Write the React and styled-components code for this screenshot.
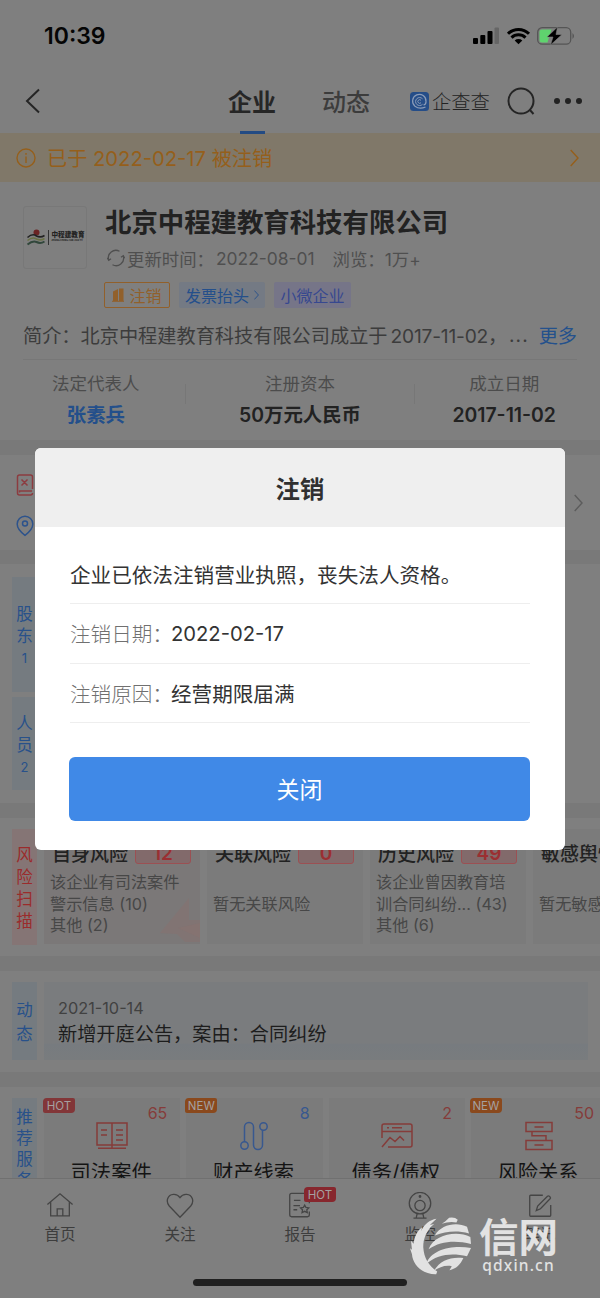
import React from "react";
import styled, { createGlobalStyle, css } from "styled-components";

const flexbox = ({ dir = "row", jc = "center", ai = "center" } = {}) => css`
  display: flex;
  flex-direction: ${dir};
  justify-content: ${jc};
  align-items: ${ai};
`;

const risks = [
  {
    title: "自身风险",
    count: 12,
    lines: ["该企业有司法案件", "警示信息 (10)", "其他 (2)"],
    hot: true
  },
  { title: "关联风险", count: 0, lines: ["暂无关联风险"] },
  {
    title: "历史风险",
    count: 49,
    lines: ["该企业曾因教育培", "训合同纠纷... (43)", "其他 (6)"]
  },
  { title: "敏感舆情", count: 0, lines: ["暂无敏感舆情"] }
];

const BookIcon = () => (
  <svg width="32" height="30" viewBox="0 0 32 30" fill="none" stroke="currentColor" strokeWidth="1.5">
    <path d="M1 2h30v22H1zM16 2v25M2 27.300h28M5 9h6M5 14h6M20 9h7M20 14h7M20 19h7" />
  </svg>
);

const RouteIcon = () => (
  <svg width="30" height="30" viewBox="0 0 30 30" fill="none" stroke="currentColor" strokeWidth="1.500">
    <circle cx="5.500" cy="24.500" r="3.700" />
    <circle cx="24.500" cy="5.500" r="3.700" />
    <path d="M5.500 20.800V6a4.500 4.500 0 0 1 9 0v18a4.500 4.500 0 0 0 9 0V9.200" />
  </svg>
);

const ChartIcon = () => (
  <svg width="34" height="30" viewBox="0 0 34 30" fill="none" stroke="currentColor" strokeWidth="1.500">
    <path d="M2 17V5q0-2 2-2h26q2 0 2 2v19q0 2-2 2H8M2 10.500h30M7 6.800h2M12 6.800h10M2 26l8-9.500 5 4 5-5 4 4" />
  </svg>
);

const RelationIcon = () => (
  <svg width="30" height="30" viewBox="0 0 30 30" fill="none" stroke="currentColor" strokeWidth="1.500">
    <path d="M2 1.500h26v9H2zM2 19.500h26v9H2zM10.500 6h9M10.500 24h9M8 10.500v4.300h14v4.700" />
  </svg>
);

const services = [
  { title: "司法案件", count: 65, tag: "HOT", tone: "#853c3a", Icon: BookIcon },
  { title: "财产线索", count: 8, tag: "NEW", tone: "#38588f", Icon: RouteIcon },
  { title: "债务/债权", count: 2, tone: "#853c3a", Icon: ChartIcon },
  { title: "风险关系", count: 50, tag: "NEW", tone: "#853c3a", Icon: RelationIcon }
];

const tabIcons = {
  home: (
    <path d="M1.500 13.500 15 2l13.500 11.500M5 11v14.500h20V11M12 25.500v-7.500h6v7.500" />
  ),
  heart: (
    <path d="M15 27 3.500 15C-.8 9.500 2 3 7.800 2.500c3-.3 5.500 1 7.200 3.500C16.700 3.500 19.200 2.200 22.200 2.500 28 3 30.800 9.500 26.500 15z" />
  ),
  report: (
    <path d="M25 12V3.500q0-2-2-2H6q-2 0-2 2v21q0 2 2 2h17q2 0 2-2V21M8.500 9h7M8 14.500h7M8 19h4M20 14l1.400 2.600 3 .5-2.100 2 .5 2.900-2.800-1.300-2.800 1.300.5-2.900-2.100-2 3-.5z" />
  ),
  camera: (
    <>
      <circle cx="15" cy="12" r="11.500" />
      <circle cx="15" cy="14.500" r="5.500" />
      <circle cx="15" cy="4.800" r=".8" />
      <path d="m12 23-1 4.500M18 23l1 4.500M8 28h14" />
    </>
  ),
  note: (
    <path d="M18 3.500H5q-1 0-1 1V25q0 1 1 1h20.500q1 0 1-1V14M11 20l1.500-5L23 4.500q1-.8 2 0l.8.8q1 1 0 2L15.500 18z" />
  )
};

const tabs = [
  { label: "首页", icon: "home" },
  { label: "关注", icon: "heart" },
  { label: "报告", icon: "report", hot: true },
  { label: "监控", icon: "camera" },
  { label: "笔记", icon: "note" }
];

const Chevron = ({ size = 18, width = 1.4 }) => (
  <svg width={size / 2} height={size} viewBox="0 0 9 18" fill="none" stroke="currentColor" strokeWidth={width}>
    <path d="m.7 1 7.300 8-7.300 8" />
  </svg>
);

const StatusBar = () => (
  <Status>
    <Clock>10:39</Clock>
    <svg width="104" height="20" viewBox="0 0 104 20">
      <rect x="1" y="12" width="5" height="6" rx="1" />
      <rect x="8.300" y="9" width="5" height="9" rx="1" />
      <rect x="15.500" y="5" width="5" height="13" rx="1" />
      <rect x="22.500" y="1.500" width="4.500" height="16.500" rx="1" fill="#666" />
      <path d="M46.500 18.300 42.700 14.500a5.600 5.600 0 0 1 7.600 0z" />
      <path d="M39.500 11.600a10 10 0 0 1 14 0M36 7.700a15 15 0 0 1 21 0" fill="none" stroke="#000" strokeWidth="3" />
      <rect x="65.700" y="1.700" width="33" height="16.500" rx="4.500" fill="none" stroke="#555" strokeWidth="1.300" />
      <path d="M70 3.500h9.500l-4 13H70q-2.500 0-2.500-2.500V6q0-2.500 2.500-2.500z" fill="#5fd36e" />
      <path d="M100.500 7q3 3 0 6z" fill="#555" />
      <path d="M85.500 1 75 11h6l-2.500 8L90 8.500h-6z" stroke="#7f7f7f" strokeWidth=".6" />
    </svg>
  </Status>
);

const NavBar = () => (
  <Nav>
    <svg width="16" height="26" viewBox="0 0 16 26" fill="none" stroke="#252525" strokeWidth="2">
      <path d="M14 1.500 2 13l12 11.500" />
    </svg>
    <NavTabs>
      <NavTab $active>企业</NavTab>
      <NavTab>动态</NavTab>
    </NavTabs>
    <Brand>
      <svg width="19" height="19" viewBox="0 0 19 19" fill="none">
        <rect width="19" height="19" rx="3.500" fill="#254d88" />
        <path d="M15.500 15q-6 2.800-10.500-.8a6.700 6.700 0 1 1 11-4.700q.2 3-2.500 3.500" stroke="#8b9cb8" strokeWidth="1.200" />
        <path d="M12.500 12.300a4 4 0 1 1 0-5.500M11 10.700a1.800 1.800 0 1 1 0-2.400" stroke="#8b9cb8" />
      </svg>
      企查查
    </Brand>
    <svg width="29" height="29" viewBox="0 0 29 29" fill="none" stroke="#252525" strokeWidth="2">
      <circle cx="14" cy="14" r="12.500" />
      <path d="m22.500 22.500 4 4.500" />
    </svg>
    <Dots>
      <Dot />
      <Dot />
      <Dot />
    </Dots>
  </Nav>
);

const Company = () => (
  <CompanyBox>
    <CompanyHead>
      <LogoBox>
        <svg width="19" height="17" viewBox="0 0 19 17" fill="none">
          <circle cx="10.500" cy="3.500" r="3" fill="#6b2424" />
          <path d="M1.500 8.500q5-4.500 9-1.500 4 2 8-.5" stroke="#222" strokeWidth="1.600" />
          <path d="M1.500 11.500q5-4 9-1.500 4 2 8-.5" stroke="#697044" strokeWidth="1.600" />
          <path d="M1.500 15.500q5-4 9-2.500 4 2 8-.5" stroke="#31473b" strokeWidth="2" />
        </svg>
        <LogoName>
          中程建教育
          <LogoSub>ZHONG CHENG JIAN JIAO YU</LogoSub>
        </LogoName>
      </LogoBox>
      <CompanyMain>
        <CompanyName>北京中程建教育科技有限公司</CompanyName>
        <Updated>
          <svg width="18" height="18" viewBox="0 0 18 18" fill="none" stroke="currentColor" strokeWidth="1.300">
            <path d="M1.700 11A7.500 7.500 0 0 1 12.500 2.300M16.300 7A7.500 7.500 0 0 1 5.500 15.700M.3 8.800l1.400 2.600 2.300-1.700M17.700 9.200l-1.400-2.600L14 8.300" />
          </svg>
          <span>更新时间：</span>
          <UpdateDate>2022-08-01</UpdateDate>
          <span>浏览：1万+</span>
        </Updated>
        <Tags>
          <Tag $w={66} $color="#91602b" $outline>
            <svg width="12" height="14" viewBox="0 0 12 14" fill="currentColor">
              <path d="M1 3.500 6 1v12H1zM7 .5h4.500V13H7z" />
              <path d="M0 13.300h12M2.500 5.500h2M2.500 8.500h2" stroke="#91602b" />
            </svg>
            注销
          </Tag>
          <Tag $w={86} $color="#244f8b" $bg="#747a84">
            发票抬头
            <Chevron size={10} width={1.6} />
          </Tag>
          <Tag $w={77} $color="#37488f" $bg="#767588">
            小微企业
          </Tag>
        </Tags>
      </CompanyMain>
    </CompanyHead>
    <Intro>
      <span>简介：北京中程建教育科技有限公司成立于</span>
      <IntroDate>2017-11-02，</IntroDate>
      <IntroRest>...</IntroRest>
      <More>更多</More>
    </Intro>
    <Facts>
      <Fact>
        <FactLabel>法定代表人</FactLabel>
        <FactValue $link>张素兵</FactValue>
      </Fact>
      <Separator />
      <Fact $wide>
        <FactLabel>注册资本</FactLabel>
        <FactValue>50万元人民币</FactValue>
      </Fact>
      <Separator />
      <Fact>
        <FactLabel>成立日期</FactLabel>
        <FactValue>2017-11-02</FactValue>
      </Fact>
    </Facts>
  </CompanyBox>
);

const vertical = (text) => [...text].map((char) => <span key={char}>{char}</span>);

const CancelDialog = () => (
  <Mask>
    <Dialog>
      <DialogTitle>注销</DialogTitle>
      <DialogBody>
        <DialogRow>企业已依法注销营业执照，丧失法人资格。</DialogRow>
        <DialogRow>
          <DialogLabel>注销日期：</DialogLabel>
          <DialogDate>2022-02-17</DialogDate>
        </DialogRow>
        <DialogRow>
          <DialogLabel>注销原因：</DialogLabel>经营期限届满
        </DialogRow>
        <CloseButton>关闭</CloseButton>
      </DialogBody>
    </Dialog>
  </Mask>
);

const Watermark = () => (
  <Mark>
    <svg width="63" height="60" viewBox="30 105 190 180" fill="currentColor">
      <path d="M110 116 90 135l13-3C80 150 70 176 70 202c2 32 16 56 42 73l-3 8C66 284 38 254 36 223l-6-18 6 4-3-27 8 9c2-22 12-40 25-49l-2 10c9-19 25-33 46-36z" />
      <path d="m126 131 10-7 12-11q17-3 26 6l-4 8q-22-4-44 4z" />
      <path d="M105 166c18-33 66-42 97-26l6 20c-38-10-70-6-103 6z" />
      <path d="M86 208c16-44 84-58 126-37l2 21c-46-12-93-9-128 16z" />
      <path d="M79 252c15-45 81-58 135-48l-12 25c-45-11-89-7-123 23z" />
      <path d="M102 273c20-34 52-43 89-39-9 20-21 32-42 37l7-12c-20-4-37 3-54 14z" />
    </svg>
    <MarkText>
      <MarkName>信网</MarkName>
      <MarkUrl>qdxin.cn</MarkUrl>
    </MarkText>
  </Mark>
);

const App = () => {
  return (
    <Phone>
      <GlobalStyle />
      <StatusBar />
      <NavBar />
      <Notice>
        <svg width="20" height="20" viewBox="0 0 20 20" fill="none" stroke="currentColor" strokeWidth="1.400">
          <circle cx="10" cy="10" r="9" />
          <path d="M10 8.500V15M10 5v1.700" />
        </svg>
        <NoticeText>已于 2022-02-17 被注销</NoticeText>
        <Chevron />
      </Notice>
      <Content>
        <Company />

        <Contact>
          <ContactIcons>
            <svg width="18" height="22" viewBox="0 0 18 22" fill="none" stroke="#8c3c40" strokeWidth="1.500">
              <path d="M3.500 1h11q2 0 2 2v12M16.500 19q0 2-2 2h-11q-2 0-2-2V3q0-2 2-2M3.500 18.500V17H16M5.500 5.500l6 6M11.500 5.500l-6 6" />
            </svg>
            <svg width="18" height="22" viewBox="0 0 18 22" fill="none" stroke="#2d538c" strokeWidth="1.500">
              <path d="M9 20.300C4.500 17 1.200 13 1.200 9a7.800 7.800 0 0 1 15.600 0c0 4-3.300 8-7.800 11.300z" />
              <circle cx="9" cy="8.500" r="2.500" />
            </svg>
          </ContactIcons>
          <Chevron />
        </Contact>

        <People>
          <SideLabel $h={115}>
            {vertical("股东")}
            <SideCount>1</SideCount>
          </SideLabel>
          <SideLabel $h={93}>
            {vertical("人员")}
            <SideCount>2</SideCount>
          </SideLabel>
        </People>

        <Section $h={138}>
          <SideLabel $h={116} $danger>
            {vertical("风险扫描")}
          </SideLabel>
          <Scroller $gap={7}>
            {risks.map(({ title, count, lines, hot }) => (
              <RiskCard key={title} $hot={hot}>
                <RiskHead>
                  {title}
                  <RiskCount>{count}</RiskCount>
                </RiskHead>
                <RiskLines>
                  {lines.map((line) => (
                    <span key={line}>{line}</span>
                  ))}
                </RiskLines>
                {hot && (
                  <Flash width="40" height="44" viewBox="0 0 40 44">
                    <path d="M0 35 29 0v22h11v22H25l-8-8z" fill="#8b6f6c" opacity=".4" />
                    <path d="m18 30 22-5v15z" fill="#8f716d" opacity=".3" />
                  </Flash>
                )}
              </RiskCard>
            ))}
          </Scroller>
        </Section>

        <Section $h={101}>
          <SideLabel $h={78} $lh={24}>
            {vertical("动态")}
          </SideLabel>
          <NewsCard>
            <NewsDate>2021-10-14</NewsDate>
            <NewsTitle>新增开庭公告，案由：合同纠纷</NewsTitle>
          </NewsCard>
        </Section>

        <Section $h={150}>
          <SideLabel $h={130} $lh={21} $top>
            {vertical("推荐服务")}
          </SideLabel>
          <Scroller $gap={6}>
            {services.map(({ title, count, tag, tone, Icon }) => (
              <ServiceCard key={title} $tone={tone}>
                <ServiceCount>{count}</ServiceCount>
                <Icon />
                <ServiceTitle>{title}</ServiceTitle>
                {tag && <Badge $kind={tag}>{tag}</Badge>}
              </ServiceCard>
            ))}
          </Scroller>
        </Section>
      </Content>

      <TabBar>
        <TabRow>
          {tabs.map(({ label, icon, hot }) => (
            <TabItem key={label}>
              <svg width="28" height="28" viewBox="0 0 30 30" fill="none" stroke="#454545" strokeWidth="1.400">
                {tabIcons[icon]}
              </svg>
              {label}
              {hot && <TabBadge>HOT</TabBadge>}
            </TabItem>
          ))}
        </TabRow>
        <HomeIndicator />
      </TabBar>

      <CancelDialog />
      <Watermark />
    </Phone>
  );
};

export default App;

const GlobalStyle = createGlobalStyle`
  * {
    box-sizing: border-box;
  }

  body {
    margin: 0;
    background: #7f7f7f;
  }

  svg {
    display: block;
    flex-shrink: 0;
  }
`;

const Phone = styled.div`
  ${flexbox({ dir: "column", jc: "flex-start", ai: "stretch" })}
  position: relative;
  width: 600px;
  height: 1298px;
  overflow: hidden;
  background: #7f7f7f;
  color: #222;
  font-family: Inter, "Noto Sans CJK SC", sans-serif;
  white-space: nowrap;
`;

const Status = styled.div`
  ${flexbox({ jc: "space-between" })}
  height: 72px;
  padding: 0 24px 0 44px;
  flex-shrink: 0;
`;

const Clock = styled.div`
  font-size: 23px;
  font-weight: 600;
  color: #050505;
`;

const Nav = styled.div`
  ${flexbox({ jc: "flex-start" })}
  height: 61px;
  padding: 0 17px 3px 25px;
  flex-shrink: 0;
`;

const NavTabs = styled.div`
  ${flexbox()}
  gap: 46px;
  margin-left: 187px;
  margin-right: 40px;
  padding-top: 3px;
  height: 58px;
`;

const NavTab = styled.div`
  position: relative;
  font-size: 24px;
  line-height: 30px;
  font-weight: ${({ $active }) => ($active ? 700 : 500)};
  color: ${({ $active }) => ($active ? "#262626" : "#3c3c3c")};

  ${({ $active }) =>
    $active &&
    css`
      &::after {
        content: "";
        position: absolute;
        left: 12px;
        bottom: -16px;
        width: 25px;
        height: 3px;
        background: #234b83;
      }
    `}
`;

const Brand = styled.div`
  ${flexbox()}
  gap: 3px;
  font-size: 19.3px;
  font-weight: 300;
  color: #222;
  margin-right: 17px;
`;

const Dots = styled.div`
  ${flexbox()}
  gap: 5px;
  margin-left: 18px;
`;

const Dot = styled.i`
  width: 6px;
  height: 6px;
  border-radius: 50%;
  background: #222;
`;

const Notice = styled.div`
  ${flexbox({ jc: "flex-start" })}
  height: 49px;
  padding: 0 21px 0 16px;
  background: #807869;
  color: #955f1b;
  flex-shrink: 0;
`;

const NoticeText = styled.div`
  flex: 1;
  margin-left: 11px;
  font-size: 20.2px;
`;

const Content = styled.div`
  ${flexbox({ dir: "column", jc: "flex-start", ai: "stretch" })}
  flex: 1;
  min-height: 0;
  overflow: hidden;
  gap: 15px;
  background: #797979;
`;

const CompanyBox = styled.div`
  height: 258px;
  padding: 24px 0 0;
  background: #7f7f7f;
  flex-shrink: 0;
`;

const CompanyHead = styled.div`
  ${flexbox({ jc: "flex-start", ai: "flex-start" })}
  padding-left: 23px;
`;

const LogoBox = styled.div`
  ${flexbox()}
  width: 64px;
  height: 63px;
  gap: 3px;
  border: 1px solid #787878;
  border-radius: 3px;
`;

const LogoName = styled.div`
  padding-left: 3px;
  border-left: 1px solid #333;
  font-family: "Noto Sans CJK SC", sans-serif;
  font-size: 6.6px;
  font-weight: 900;
  line-height: 9px;
  height: 15px;
`;

const LogoSub = styled.div`
  font-size: 2.2px;
  line-height: 3px;
`;

const CompanyMain = styled.div`
  margin-left: 18px;
`;

const CompanyName = styled.div`
  font-size: 26.4px;
  font-weight: 700;
  line-height: 32px;
`;

const Updated = styled.div`
  ${flexbox({ jc: "flex-start" })}
  margin-top: 8px;
  padding-left: 2px;
  gap: 2px;
  height: 24px;
  font-size: 17.4px;
  color: #4f4f4f;
`;

const UpdateDate = styled.span`
  margin-right: 16px;
`;

const Tags = styled.div`
  ${flexbox({ jc: "flex-start" })}
  gap: 9px;
  margin: 12px 0 0 -1px;
`;

const Tag = styled.div`
  ${flexbox()}
  gap: 5px;
  width: ${({ $w }) => $w}px;
  height: 26px;
  padding-bottom: 1px;
  font-size: 16px;
  border-radius: 2px;
  color: ${({ $color }) => $color};
  background: ${({ $bg }) => $bg || "transparent"};
  border: ${({ $outline, $color }) => ($outline ? `1px solid ${$color}` : "none")};
`;

const Intro = styled.div`
  ${flexbox({ jc: "flex-start" })}
  height: 50px;
  margin: 2px 23px 0;
  border-bottom: 1px solid #777;
  font-size: 19.2px;
  color: #3c3c3c;
`;

const IntroDate = styled.span`
  margin-left: 3px;
  letter-spacing: -0.2px;
`;

const IntroRest = styled.span`
  margin-left: 2px;
  letter-spacing: 1px;
`;

const More = styled.span`
  margin-left: auto;
  color: #24518c;
`;

const Facts = styled.div`
  ${flexbox({ ai: "flex-start" })}
  padding: 10px 7px 0;
`;

const Fact = styled.div`
  ${flexbox({ dir: "column" })}
  width: ${({ $wide }) => ($wide ? 229 : 178)}px;
`;

const Separator = styled.i`
  width: 1px;
  height: 20px;
  margin-top: 14px;
  background: #777;
`;

const FactLabel = styled.div`
  font-size: 17.5px;
  line-height: 27px;
  color: #4c4c4c;
`;

const FactValue = styled.div`
  font-size: 19.4px;
  font-weight: 600;
  line-height: 37px;
  color: ${({ $link }) => ($link ? "#234f8b" : "#222")};
`;

const Contact = styled.div`
  ${flexbox({ jc: "space-between" })}
  height: 95px;
  padding: 0 17px 0 16px;
  background: #7f7f7f;
  color: #5c5c5c;
  flex-shrink: 0;
`;

const ContactIcons = styled.div`
  ${flexbox({ dir: "column" })}
  gap: 19px;
  padding-top: 6px;
`;

const People = styled.div`
  ${flexbox({ dir: "column", jc: "flex-start", ai: "flex-start" })}
  gap: 5px;
  height: 239px;
  margin-top: -1px;
  padding: 13px 12px;
  background: #7f7f7f;
  flex-shrink: 0;
`;

const Section = styled.div`
  ${flexbox({ jc: "flex-start", ai: "flex-start" })}
  gap: 7px;
  height: ${({ $h }) => $h}px;
  padding: 11px 12px;
  overflow: hidden;
  background: #7f7f7f;
  flex-shrink: 0;
`;

const SideLabel = styled.div`
  ${flexbox({ dir: "column" })}
  ${({ $top }) => $top && "justify-content: flex-start;"}
  padding-top: ${({ $top }) => ($top ? 9 : 2)}px;
  width: 25px;
  height: ${({ $h }) => $h}px;
  flex-shrink: 0;
  font-size: 16.5px;
  line-height: ${({ $lh = 22 }) => $lh}px;
  color: ${({ $danger }) => ($danger ? "#9b2b2b" : "#28518a")};
  background: ${({ $danger }) => ($danger ? "#857575" : "#757b80")};
`;

const SideCount = styled.span`
  font-size: 13px;
`;

const Scroller = styled.div`
  ${flexbox({ jc: "flex-start", ai: "flex-start" })}
  gap: ${({ $gap }) => $gap}px;
  flex-shrink: 0;
`;

const RiskCard = styled.div`
  position: relative;
  width: 156px;
  height: 115px;
  padding: 10px 6px 0;
  background: ${({ $hot }) => ($hot ? "#7b7878" : "#7b7b7b")};
`;

const RiskHead = styled.div`
  ${flexbox({ jc: "space-between" })}
  padding: 0 3px 0 2px;
  font-size: 19px;
  font-weight: 500;
  height: 26px;
`;

const RiskCount = styled.div`
  ${flexbox()}
  width: 56px;
  height: 22px;
  margin-top: 2px;
  border: 1px solid #9b5053;
  border-radius: 3px;
  background: #826a6b;
  color: #9b2f32;
  font-weight: 600;
`;

const RiskLines = styled.div`
  ${flexbox({ dir: "column", ai: "flex-start" })}
  height: 65px;
  margin-top: 7px;
  font-size: 16.2px;
  line-height: 21.5px;
  color: #474747;
`;

// faint lightning in the corner of the risky card
const Flash = styled.svg`
  position: absolute;
  right: 0;
  bottom: 2px;
`;

const NewsCard = styled.div`
  flex: 1;
  height: 78px;
  padding: 13px 14px;
  background: linear-gradient(#7a7c7e 78%, #777b7f 80%, #797c7e);
`;

const NewsDate = styled.div`
  font-size: 16.3px;
  line-height: 26px;
  color: #414141;
`;

const NewsTitle = styled.div`
  font-size: 19.2px;
  line-height: 26px;
  color: #1d1d1d;
`;

const ServiceCard = styled.div`
  ${flexbox({ dir: "column", jc: "flex-start" })}
  position: relative;
  width: 136.3px;
  height: 130px;
  background: #7b7b7b;
  color: ${({ $tone }) => $tone};
`;

const ServiceCount = styled.div`
  align-self: flex-end;
  margin: 5px 13px -2px 0;
  font-size: 16px;
  line-height: 20px;
`;

const ServiceTitle = styled.div`
  margin: 8px 2px 0 0;
  font-size: 20.3px;
  line-height: 28px;
  color: #141414;
`;

const badge = css`
  ${flexbox()}
  position: absolute;
  width: 32px;
  height: 15px;
  border-radius: 4px 2px 4px 2px;
  font-size: 11.5px;
  color: #a5a0a0;
`;

const Badge = styled.div`
  ${badge}
  top: 0;
  left: -1px;
  background: ${({ $kind }) => ($kind === "HOT" ? "#823638" : "#8a491d")};
`;

const TabBar = styled.div`
  height: 120px;
  border-top: 1px solid #707070;
  background: #7f7f7f;
  flex-shrink: 0;
`;

const TabRow = styled.div`
  display: grid;
  grid-template-columns: repeat(5, 1fr);
  height: 100px;
`;

const TabItem = styled.div`
  ${flexbox({ dir: "column", jc: "flex-start" })}
  position: relative;
  padding-top: 13px;
  gap: 4px;
  font-size: 15.6px;
  line-height: 22px;
  color: #3d3d3d;
`;

const TabBadge = styled.div`
  ${badge}
  top: 8px;
  left: 64px;
  background: #87272e;
`;

const HomeIndicator = styled.div`
  width: 214px;
  height: 7px;
  margin: 0 auto;
  border-radius: 4px;
  background: #202020;
`;

const Mask = styled.div`
  ${flexbox({ jc: "center" })}
  position: absolute;
  inset: 0;
`;

const Dialog = styled.div`
  width: 530px;
  height: 402px;
  overflow: hidden;
  border-radius: 6px;
  background: #fff;
`;

const DialogTitle = styled.div`
  ${flexbox()}
  height: 79px;
  padding-bottom: 1px;
  background: #efefef;
  font-size: 24.4px;
  font-weight: 700;
  color: #303030;
`;

const DialogBody = styled.div`
  padding: 18px 35px;
`;

const DialogRow = styled.div`
  ${flexbox({ jc: "flex-start" })}
  height: 59.3px;
  border-bottom: 1px solid #eee;
  font-size: 20.6px;
  color: #333;
`;

const DialogLabel = styled.span`
  margin-right: -2px;
  font-weight: 300;
  color: #707070;
`;

const DialogDate = styled.span`
  font-size: 20.2px;
`;

const CloseButton = styled.button`
  width: 461px;
  height: 64px;
  margin: 34px 0 0 -1px;
  padding: 0 0 2px;
  border: none;
  border-radius: 6px;
  background: #4089e7;
  color: #fff;
  font-family: inherit;
  font-size: 23px;
`;

// site stamp in the lower right corner
const Mark = styled.div`
  ${flexbox({ jc: "flex-start", ai: "flex-start" })}
  position: absolute;
  top: 1215px;
  left: 410px;
  color: #e2e2e2;
`;

const MarkText = styled.div`
  ${flexbox({ dir: "column" })}
  margin-left: 6px;
`;

const MarkName = styled.div`
  font-size: 39.5px;
  font-weight: 700;
  line-height: 46px;
`;

const MarkUrl = styled.div`
  margin-top: -3px;
  font-family: "Noto Sans", sans-serif;
  font-size: 15.5px;
  font-weight: 500;
  line-height: 14px;
  letter-spacing: 1.2px;
`;
